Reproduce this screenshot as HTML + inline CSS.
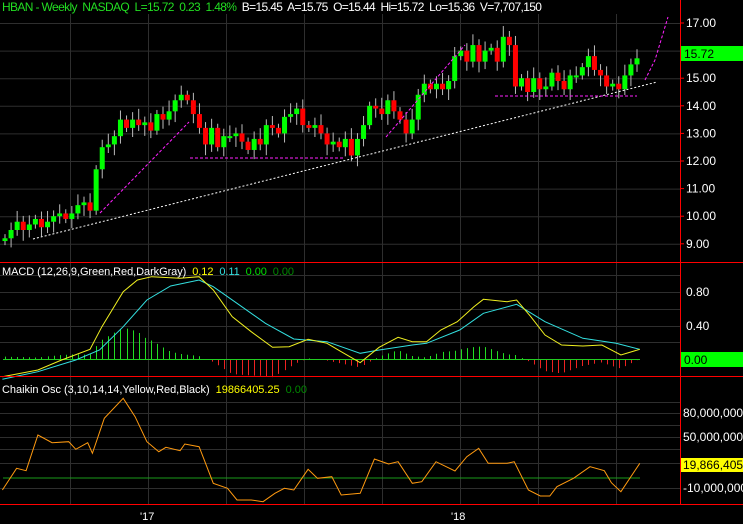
<!DOCTYPE html><html><head><style>
body{margin:0;background:#000;width:743px;height:524px;overflow:hidden}
svg{display:block;font-family:"Liberation Sans",Arial,sans-serif}
</style></head><body>
<svg id="s" width="743" height="524" xmlns="http://www.w3.org/2000/svg">
<rect width="743" height="524" fill="#000"/>
<g id="grid" stroke="#2e2e2e" stroke-width="1"></g>
<g id="c"></g>
<g id="h"></g>
<polyline id="cy" fill="none" stroke="#33e0e0" stroke-width="1"/>
<polyline id="ye" fill="none" stroke="#f0f020" stroke-width="1"/>
<line x1="3" y1="478" x2="640" y2="478" stroke="#1a9a1a"/>
<polyline id="ch" fill="none" stroke="#ff9a10" stroke-width="1"/>
<line x1="33" y1="239" x2="657" y2="82" stroke="#fff" stroke-dasharray="2,2"/>
<g stroke="#ff22ff" stroke-dasharray="3,2" fill="none">
<line x1="190" y1="158" x2="343" y2="158"/><line x1="495" y1="96" x2="637" y2="96"/>
<line x1="100" y1="213" x2="189" y2="122"/><line x1="386" y1="137" x2="465" y2="45"/>
<polyline points="645,80 655,60 668,17"/>
</g>
<g stroke="#ff0000"><line x1="680.5" y1="0" x2="680.5" y2="504"/><line x1="0" y1="262.5" x2="743" y2="262.5"/><line x1="0" y1="376.5" x2="743" y2="376.5"/><line x1="0" y1="504.5" x2="743" y2="504.5"/></g>
<g id="ax" fill="#fff" font-size="12"></g>
<rect x="681" y="46" width="62" height="15" fill="#00ff00"/><text x="684" y="58" font-size="12" fill="#000">15.72</text>
<rect x="681" y="352" width="62" height="15" fill="#00ff00"/><text x="684" y="364" font-size="12" fill="#000">0.00</text>
<rect x="681" y="458" width="62" height="14" fill="#ffff00"/><text x="683" y="469" font-size="12" fill="#000">19,866,405</text>
<text x="2" y="11" font-size="12" fill="#fff" textLength="540" lengthAdjust="spacing" xml:space="preserve"><tspan fill="#22dd22">HBAN - Weekly  NASDAQ  L=15.72  0.23  1.48%</tspan>  B=15.45  A=15.75  O=15.44  Hi=15.72  Lo=15.36  V=7,707,150</text>
<text x="2" y="275" font-size="11" fill="#fff" textLength="292" lengthAdjust="spacing" xml:space="preserve">MACD (12,26,9,Green,Red,DarkGray)  <tspan fill="#ffff00">0.12</tspan>  <tspan fill="#33e0e0">0.11</tspan>  <tspan fill="#00dd00">0.00</tspan>  <tspan fill="#008800">0.00</tspan></text>
<text x="2" y="393" font-size="11" fill="#fff" textLength="305" lengthAdjust="spacing" xml:space="preserve">Chaikin Osc (3,10,14,14,Yellow,Red,Black)  <tspan fill="#ffff00">19866405.25</tspan>  <tspan fill="#008800">0.00</tspan></text>
<text x="140" y="520" font-size="11" fill="#fff">'17</text><text x="451" y="520" font-size="11" fill="#fff">'18</text>
</svg>
<script>
var N='http://www.w3.org/2000/svg';
function el(p,t,a){var e=document.createElementNS(N,t);for(var k in a)e.setAttribute(k,a[k]);document.getElementById(p).appendChild(e);return e}
[70,148,226,304,382,460,538,616].forEach(function(x){el('grid','line',{x1:x+.5,y1:14,x2:x+.5,y2:504})});
function py(p){return 23+(17-p)*27.6}
for(var p=9;p<=17;p++){el('grid','line',{x1:0,y1:py(p)+.5,x2:680,y2:py(p)+.5});var t=el('ax','text',{x:686,y:py(p)+4});t.textContent=p.toFixed(2);el('ax','line',{x1:680,y1:py(p),x2:684,y2:py(p),stroke:'#f00'})}
[[292,'0.80'],[326,'0.40']].forEach(function(a){el('grid','line',{x1:0,y1:a[0]+.5,x2:680,y2:a[0]+.5});var t=el('ax','text',{x:686,y:a[0]+4});t.textContent=a[1]});
el('grid','line',{x1:0,y1:309.5,x2:680,y2:309.5});el('grid','line',{x1:0,y1:342.5,x2:680,y2:342.5});el('grid','line',{x1:0,y1:275.5,x2:680,y2:275.5});
[[413,'80,000,000'],[437,'50,000,000'],[488,'-10,000,000']].forEach(function(a){el('grid','line',{x1:0,y1:a[0]+.5,x2:680,y2:a[0]+.5});var t=el('ax','text',{x:683,y:a[0]+4});t.textContent=a[1]});
[402,425,449,463].forEach(function(y){el('grid','line',{x1:0,y1:y+.5,x2:680,y2:y+.5})});
var C=[9.2,9.5,9.8,9.5,9.7,9.9,9.6,9.8,10.0,10.1,9.9,10.1,10.4,10.5,10.2,11.7,12.5,12.6,12.9,13.5,13.2,13.5,13.3,13.4,13.1,13.7,13.5,13.8,14.2,14.4,14.2,13.7,13.2,12.6,13.2,12.5,12.9,12.9,13.0,12.7,12.4,12.8,12.6,13.3,13.2,13.0,13.6,13.7,13.9,13.3,13.2,13.3,13.0,12.6,12.7,12.5,12.8,12.2,12.8,13.3,14.0,13.9,13.7,14.2,13.8,13.5,13.0,13.5,14.4,14.8,14.6,14.8,14.6,14.9,15.8,16.0,15.6,16.2,15.6,16.0,16.1,15.6,16.5,16.2,14.7,15.0,14.5,15.0,14.6,14.7,15.2,14.9,14.6,15.1,15.1,15.4,15.8,15.3,15.1,14.7,14.8,14.6,15.1,15.5,15.72];
var n=C.length,dx=(637-5)/(n-1);
for(var i=0;i<n;i++){var x=5+i*dx,o=i?C[i-1]:9.1,c=C[i],up=c>=o;
var hi=Math.max(o,c)+0.15+((i*7)%5)*0.06,lo=Math.min(o,c)-0.15-((i*3)%5)*0.06;
el('c','line',{x1:x,y1:py(hi),x2:x,y2:py(lo),stroke:'#bbb'});
var t=py(Math.max(o,c)),b=py(Math.min(o,c));if(b-t<2)b=t+2;
el('c','rect',{x:x-2.5,y:t,width:5,height:b-t,fill:up?'#00ff00':'#ff0000'})}
function cv(a){return a.map(function(p){return [p[0]/2.11,p[1]/3+260]})}
var Y=cv([[5,350],[80,330],[130,300],[190,268],[215,200],[260,95],[290,60],[320,50],[380,55],[420,50],[450,90],[490,170],[530,215],[575,262],[610,260],[650,238],[690,250],[720,275],[760,308],[800,262],[840,232],[870,245],[900,245],[930,210],[965,185],[1000,140],[1020,118],[1070,125],[1090,120],[1120,170],[1150,225],[1185,255],[1230,258],[1270,255],[1310,285],[1350,268]]);
var Cy=cv([[5,358],[80,335],[160,300],[210,270],[260,200],[310,120],[360,78],[420,60],[450,80],[500,130],[560,190],[620,237],[690,245],[760,280],[800,270],[870,255],[900,250],[970,210],[1020,160],[1090,133],[1150,185],[1230,235],[1300,250],[1350,268]]);
var K=cv([[5,690],[35,625],[55,632],[80,525],[110,548],[145,545],[160,568],[185,548],[195,580],[220,475],[260,415],[285,470],[310,545],[335,575],[350,562],[380,572],[390,552],[420,560],[450,670],[480,685],[500,720],[530,720],[555,725],[580,700],[600,685],[620,690],[650,628],[670,655],[700,650],[720,705],[760,700],[790,597],[820,612],[840,605],[870,670],[890,665],[920,605],[960,633],[985,590],[1010,565],[1030,610],[1070,610],[1085,605],[1115,690],[1140,708],[1160,708],[1175,680],[1210,655],[1245,620],[1275,632],[1290,668],[1310,695],[1350,610]]);
function pts(a){return a.map(function(p){return p[0].toFixed(1)+','+p[1].toFixed(1)}).join(' ')}
document.getElementById('ye').setAttribute('points',pts(Y));
document.getElementById('cy').setAttribute('points',pts(Cy));
document.getElementById('ch').setAttribute('points',pts(K));
function it(a,x){for(var i=0;i<a.length-1;i++)if(x<=a[i+1][0]){var f=(x-a[i][0])/(a[i+1][0]-a[i][0]);return a[i][1]+f*(a[i+1][1]-a[i][1])}return a[a.length-1][1]}
for(var i=0;i<n;i++){var x=Math.round(5+i*dx)+.5,d=(it(Cy,x)-it(Y,x))*0.9;
el('h','line',{x1:x,y1:359,x2:x,y2:359-d,stroke:d>=0?'#22dd22':'#ee2222'})}
el('h','line',{x1:3,y1:359.5,x2:640,y2:359.5,stroke:'#22cc22'});
</script>
</body></html>
